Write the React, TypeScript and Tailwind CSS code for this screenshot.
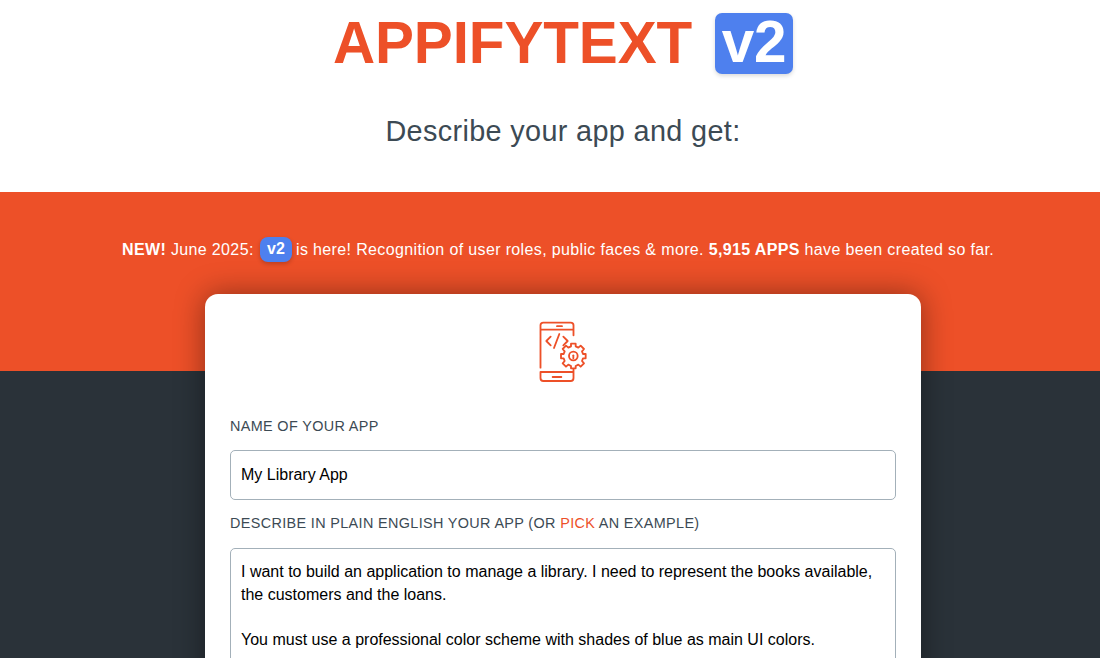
"use client";

function PhoneIcon() {
  return (
    <svg
      className="w-12 h-[61px]"
      viewBox="57 33 144 183"
      fill="none"
      stroke="#ed5028"
      strokeWidth="5.5"
      strokeLinecap="round"
      strokeLinejoin="round"
    >
      {/* Phone body */}
      <path d="M61.5 173V46Q61.5 38 70 38H152Q160.500 38 160.500 46V76M62 59H160M111 48.500H126" />
      <path d="M61.500 186H160.500V204Q160.500 213 152 213H70Q61.500 213 61.500 204ZM160.500 178V186M98 201H124" />
      {/* Code brackets */}
      <path d="M92 80L79 93L92 106M118 72L102 114M130 80L143 93L130 106" />
      {/* Gear */}
      <path d="M153 101H167V109L175 113L182 107L192 117L186 124L189 132H197V145H189L186 153L192 160L182 170L175 164L167 168V175H153V168L145 164L138 170L128 160L134 153L131 145H123V132H131L134 124L128 117L138 107L145 113L153 109Z" />
      <circle cx="160" cy="138" r="13" />
      <path d="M160 136V145" />
    </svg>
  );
}

export default function App() {
  return (
    <div className="w-[1100px] h-[658px] overflow-hidden bg-white font-['Liberation_Sans',Arial,sans-serif] tracking-[0.36px]">
      <div className="w-[1126px]">
        {/* Header */}
        <header className="h-48 flex flex-col items-center text-center">
          <h1 className="mt-[13px] h-[61px] flex items-center gap-[23px] text-[58.400px] leading-[61px] font-bold tracking-[-0.1px] text-[#ed5028]">
            <span className="h-[61px] leading-[59px]">APPIFYTEXT</span>
            <span className="h-[61px] w-[78px] rounded-[7px] bg-[#4e80ee] text-white leading-[57px] shadow-[0_2px_4px_rgba(0,0,0,0.15)]">
              v2
            </span>
          </h1>
          <h2 className="mt-[37px] text-[28.800px] leading-[40px] text-[#3c4a54]">
            Describe your app and get:
          </h2>
        </header>

        {/* News banner */}
        <section className="h-[179px] bg-[#ed5028] pt-[45px]">
          <p className="ml-[122px] h-[25px] flex items-center whitespace-pre text-base leading-[25px] text-white">
            <b>NEW!</b>
            <span> June 2025: </span>
            <b className="ml-[1.500px] mr-1 w-8 h-[25px] text-center leading-[23px] tracking-normal rounded-[8px] bg-[#4e80ee] shadow-[0_2px_4px_rgba(0,0,0,0.2)]">
              v2
            </b>
            <span>is here! Recognition of user roles, public faces &amp; more. </span>
            <b>5,915 APPS</b>
            <span> have been created so far.</span>
          </p>
        </section>

        {/* App form */}
        <main className="h-[287px] bg-[#2a3239]">
          <div className="relative -top-[77px] mx-auto w-[716px] h-[500px] rounded-[13px] bg-white px-[25px] pt-[27px] shadow-[0_0_30px_rgba(0,0,0,0.4)]">
            <div className="flex justify-center">
              <PhoneIcon />
            </div>
            <label className="block mt-[34px] text-[14.400px] leading-[20px] text-[#3c4a54]">
              NAME OF YOUR APP
            </label>
            <input
              className="block mt-[14px] w-full h-[50px] rounded-[5px] border border-[#a3b0b9] px-[10px] text-base tracking-normal text-black outline-none"
              defaultValue="My Library App"
            />
            <label className="block mt-[13px] text-[14.400px] leading-[20px] text-[#3c4a54]">
              DESCRIBE IN PLAIN ENGLISH YOUR APP (OR <span className="text-[#ed5028]">PICK</span> AN EXAMPLE)
            </label>
            <div className="mt-[15px] h-[250px] rounded-[5px] border border-[#a3b0b9] px-[10px] pt-[12px] text-base leading-[22.700px] tracking-normal text-black">
              <p>
                I want to build an application to manage a library. I need to represent the books available,
                the customers and the loans.
              </p>
              <p className="mt-[22.700px]">
                You must use a professional color scheme with shades of blue as main UI colors.
              </p>
            </div>
          </div>
        </main>
      </div>
    </div>
  );
}
